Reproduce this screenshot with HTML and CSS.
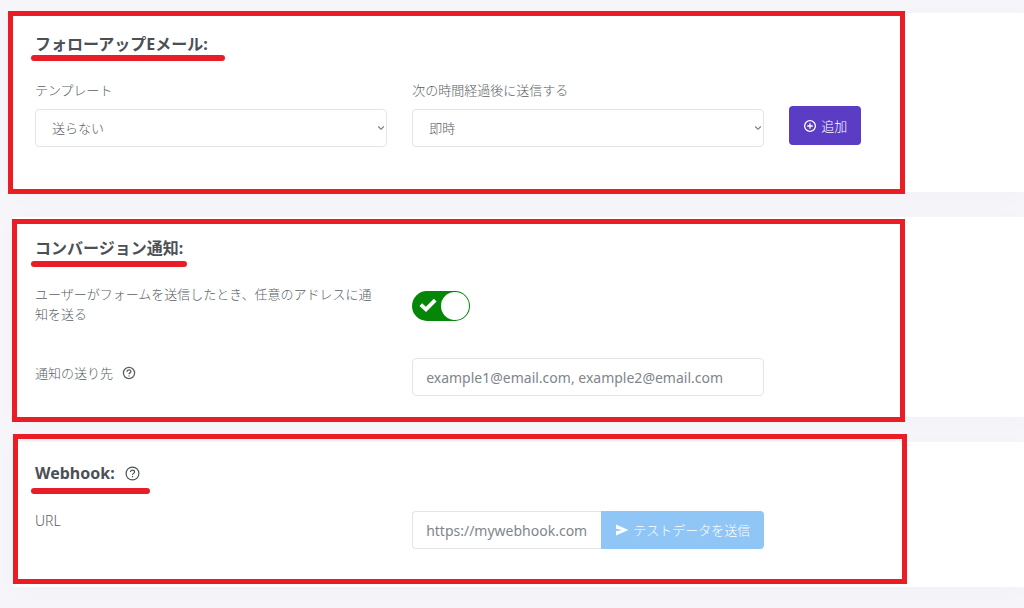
FILE: index.html
```html
<!DOCTYPE html>
<html lang="ja">
<head>
<meta charset="utf-8">
<meta name="viewport" content="width=device-width, initial-scale=1">
<title>フォーム設定</title>
<link rel="stylesheet" href="styles.css">
</head>
<body>
<main class="page">
  <section class="card card--followup">
    <h2 class="heading heading--followup">フォローアップEメール:</h2>
    <div class="row row--bottom">
      <div class="field">
        <label class="label" for="template">テンプレート</label>
        <div class="select-wrap">
          <select class="control select" id="template"><option>送らない</option></select>
          <svg class="chevron" viewBox="0 0 8 8" aria-hidden="true"><path d="M1.2 2.5 4 5.3 6.8 2.5"/></svg>
        </div>
      </div>
      <div class="field">
        <label class="label" for="delay">次の時間経過後に送信する</label>
        <div class="select-wrap">
          <select class="control select" id="delay"><option>即時</option></select>
          <svg class="chevron" viewBox="0 0 8 8" aria-hidden="true"><path d="M1.2 2.5 4 5.3 6.8 2.5"/></svg>
        </div>
      </div>
      <div class="action">
        <button class="button button--add" type="button">
          <svg class="icon" viewBox="0 0 14 14" aria-hidden="true"><circle cx="7" cy="7" r="5.4"/><path d="M7 4.2v5.6M4.2 7h5.6"/></svg>
          追加
        </button>
      </div>
    </div>
  </section>

  <section class="card card--notice">
    <h2 class="heading heading--notice">コンバージョン通知:</h2>
    <div class="row">
      <label class="label label--wrap" for="notify">ユーザーがフォームを送信したとき、任意のアドレスに通知を送る</label>
      <span class="toggle">
        <input class="toggle-input" type="checkbox" id="notify" checked>
        <svg class="toggle-check" viewBox="0 0 18 14" aria-hidden="true"><path d="M1.8 6.6 7 11.4 16.2 2.2"/></svg>
      </span>
    </div>
    <div class="row">
      <div class="label-group">
        <label class="label" for="recipients">通知の送り先</label>
        <svg class="help" viewBox="0 0 14 14" role="img" aria-label="ヘルプ"><circle cx="7" cy="7" r="5.6"/><path d="M5.1 5.7C5.1 4.5 5.9 3.9 7 3.9s1.9.7 1.9 1.7C8.9 6.9 7 6.9 7 8.3M7 9.4v1.1"/></svg>
      </div>
      <input class="control" id="recipients" type="text" placeholder="example1@email.com, example2@email.com">
    </div>
  </section>

  <section class="card card--webhook">
    <h2 class="heading heading--webhook">Webhook:
      <svg class="help help--large" viewBox="0 0 14 14" role="img" aria-label="ヘルプ"><circle cx="7" cy="7" r="6"/><path d="M5.1 5.7C5.1 4.5 5.9 3.9 7 3.9s1.9.7 1.9 1.7C8.9 6.9 7 6.9 7 8.3M7 9.4v1.1"/></svg>
    </h2>
    <div class="row">
      <label class="label label--latin" for="url">URL</label>
      <div class="input-group">
        <input class="control control--joined" id="url" type="url" placeholder="https://mywebhook.com">
        <button class="button button--send" type="button">
          <svg class="icon icon--solid" viewBox="0 0 14 14" aria-hidden="true"><path d="M1 1.6 13.4 7 1 12.4V8.2L7.4 7 1 5.8z"/></svg>
          テストデータを送信
        </button>
      </div>
    </div>
  </section>
</main>
</body>
</html>
```
FILE: styles.css
```css
* { box-sizing: border-box; }

body {
  margin: 0;
  min-height: 100vh;
  background: #f6f6fa;
  color: #5b6065;
  font-family: "Noto Sans", "Noto Sans CJK JP", sans-serif;
  font-size: 13px;
  font-weight: 300;
  line-height: 20px;
}

.page {
  display: flex;
  flex-direction: column;
  gap: 25px;
  padding: 13px 0 21px 13px;
}

.card {
  position: relative;
  padding: 19px 0 0 22px;
  background: #fff;
  box-shadow: 0 4px 24px rgba(40, 40, 60, 0.02);
}
.card--followup { padding-bottom: 45px; }
.card--notice { padding-bottom: 21px; }
.card--webhook { padding-bottom: 38px; }

/* Red marker frames and underlines laid over the form */
.card::after {
  content: "";
  position: absolute;
  border: 5px solid #ec1c24;
  pointer-events: none;
}
.card--followup::after { inset: -2px 119px -2px -5px; }
.card--notice::after { inset: 2px 119px -5px -1px; }
.card--webhook::after { inset: -8px 117px 3px 0; }

.heading {
  position: relative;
  display: flex;
  align-items: center;
  gap: 10px;
  width: fit-content;
  margin: 0 0 24px;
  color: #4b5056;
  font-size: 16px;
  font-weight: 700;
  line-height: 24px;
}
.heading--webhook { margin-bottom: 26px; }
.heading::after {
  content: "";
  position: absolute;
  left: -4px;
  height: 6px;
  border-radius: 3px;
  background: #e91d28;
}
.heading--followup::after { right: -17px; bottom: -5px; }
.heading--notice::after { right: -4px; bottom: -7px; }
.heading--webhook::after { right: -10px; bottom: -9px; }

.row {
  display: grid;
  grid-template-columns: 3fr 3fr 2fr;
  column-gap: 25px;
  align-items: start;
}
.row + .row { margin-top: 34px; }
.row--bottom { align-items: end; }

.field { display: grid; gap: 9px; }
.label-group {
  display: flex;
  align-items: center;
  gap: 9px;
  padding-top: 5px;
}
.label--wrap { padding-right: 4px; }
.label--latin { font-size: 14px; }

.control {
  display: block;
  width: 100%;
  min-width: 0;
  height: 38px;
  padding: 0 13px;
  border: 1px solid #e2e4e7;
  border-radius: 4px;
  background: #fff;
  color: #5b6065;
  font: inherit;
}
.control::placeholder { color: #7f858b; opacity: 1; }
input.control { font-size: 14px; font-weight: 400; }
.select { padding: 0 16px; appearance: none; }
.select-wrap { position: relative; }
.chevron {
  position: absolute;
  top: 15px;
  right: 2px;
  width: 8px;
  height: 8px;
  fill: none;
  stroke: #777;
  stroke-width: 1.1;
  pointer-events: none;
}

.action { padding-bottom: 2px; }
.button {
  display: inline-flex;
  align-items: center;
  justify-content: center;
  gap: 4px;
  height: 39px;
  padding: 0 14px;
  border: 0;
  border-radius: 4px;
  color: #fff;
  font: inherit;
  white-space: nowrap;
}
.button--add { background: #5b3cc4; }
.button--send { height: 38px; background: #90c6f5; border-radius: 0 4px 4px 0; }

.icon, .help {
  flex: none;
  width: 14px;
  height: 14px;
  fill: none;
  stroke: currentColor;
  stroke-width: 1.3;
}
.icon--solid { fill: currentColor; stroke: none; }
.help--large { width: 15px; height: 15px; stroke-width: 1.1; }

.toggle {
  position: relative;
  width: 58px;
  height: 30px;
  margin-top: 7px;
}
.toggle-input {
  appearance: none;
  display: flex;
  justify-content: flex-end;
  width: 100%;
  height: 100%;
  margin: 0;
  padding: 1px;
  border-radius: 15px;
  background: #068606;
}
.toggle-input::before {
  content: "";
  width: 28px;
  border-radius: 50%;
  background: #fff;
}
.toggle-input:not(:checked) { justify-content: flex-start; background: #aaa; }
.toggle-check {
  position: absolute;
  top: 7px;
  left: 7px;
  width: 18px;
  height: 14px;
  fill: none;
  stroke: #fff;
  stroke-width: 3.8;
  pointer-events: none;
}

.input-group { display: flex; }
.control--joined { flex: 1; border-right: 0; border-radius: 4px 0 0 4px; }
```
